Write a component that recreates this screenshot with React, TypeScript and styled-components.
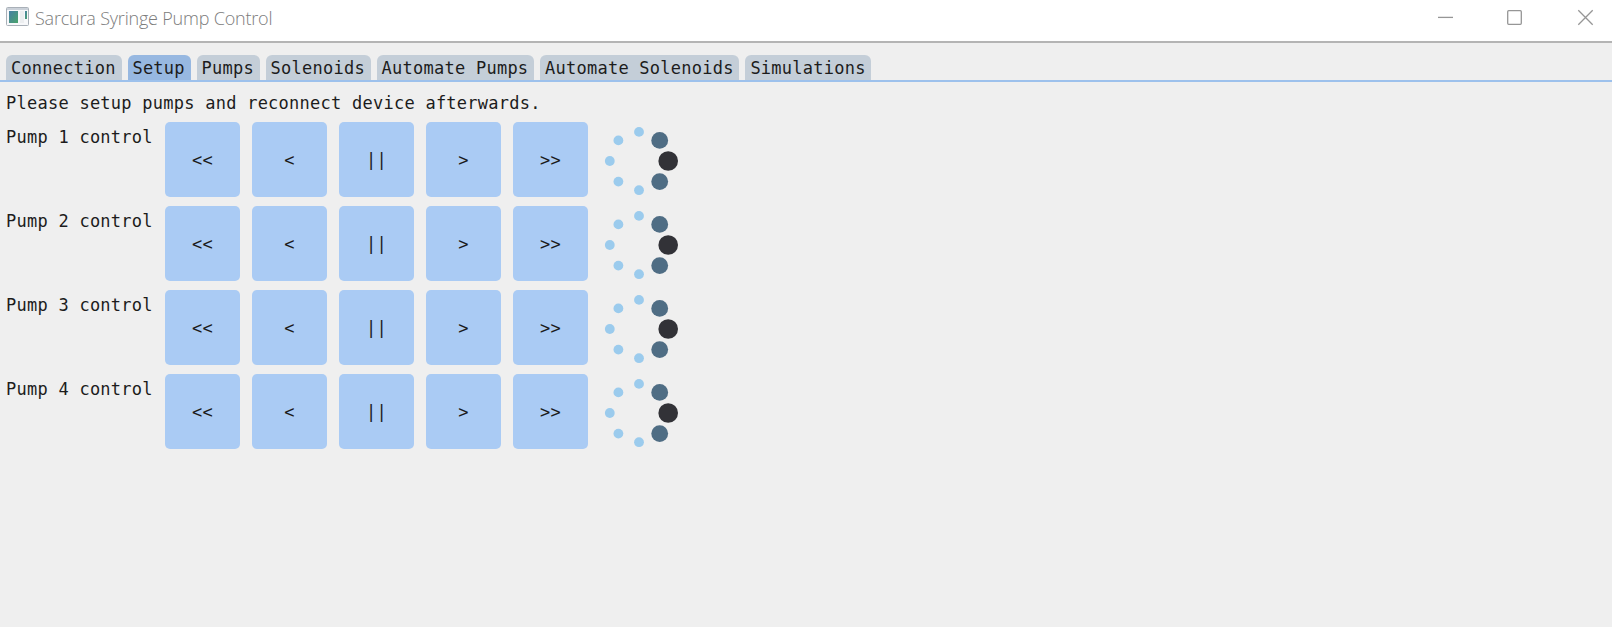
import React from 'react';
import styled, { createGlobalStyle } from 'styled-components';

const GlobalStyle = createGlobalStyle`
  * { box-sizing: border-box; }
  body { margin: 0; background: #efefef; overflow: hidden; }
`;

const Window = styled.div`
  display: flex;
  flex-direction: column;
  width: 1612px;
  height: 627px;
  background: #efefef;
  font-family: 'DejaVu Sans Mono', monospace;
  font-size: 17px;
  letter-spacing: 0.25px;
  line-height: 20px;
  color: #1c1c1c;
  white-space: pre;
`;

const TitleBar = styled.header`
  display: flex;
  align-items: flex-start;
  height: 43px;
  padding-left: 6px;
  background: #fff;
  border-bottom: 2px solid #b4b4b4;
`;

const AppIcon = styled.svg`
  margin-top: 7px;
  flex: none;
`;

const Title = styled.h1`
  margin: 6px 0 0 6px;
  flex: 1;
  font: 300 18px/25px 'Open Sans', 'Noto Sans', sans-serif;
  letter-spacing: -0.2px;
  color: #7c7c7c;
`;

const WindowControls = styled.svg`
  flex: none;
`;

const TabBar = styled.nav`
  display: flex;
  gap: 6px;
  height: 39px;
  padding: 11.5px 6px 0;
  border-bottom: 2px solid #9dc1ec;
`;

const Tab = styled.button<{ $active?: boolean }>`
  height: 25.5px;
  padding: 0 5.75px 0 4.9px;
  border: 0;
  border-radius: 6px 6px 0 0;
  background: ${({ $active }) => ($active ? '#97b8e1' : '#c4ced8')};
  color: inherit;
  font: inherit;
  letter-spacing: inherit;
  line-height: 26px;
`;

const Content = styled.main`
  padding: 11px 6px;
`;

const Message = styled.p`
  margin: 0 0 9px;
`;

const PumpList = styled.div`
  display: flex;
  flex-direction: column;
  gap: 9px;
`;

const PumpRow = styled.div`
  display: flex;
  height: 75px;
`;

const PumpLabel = styled.span`
  width: 159px;
  padding-top: 5px;
`;

const ButtonGroup = styled.div`
  display: flex;
  gap: 12px;
`;

const PumpButton = styled.button`
  width: 75px;
  height: 75px;
  padding: 0;
  border: 0;
  border-radius: 5px;
  background: #aacbf4;
  color: inherit;
  font: inherit;
  letter-spacing: inherit;
`;

const Spinner = styled.svg`
  margin-left: 12px;
`;

const tabs = ['Connection', 'Setup', 'Pumps', 'Solenoids', 'Automate Pumps', 'Automate Solenoids', 'Simulations'];
const actions = ['<<', '<', '||', '>', '>>'];

const dots = [
  { x: 39, y: 9.9, r: 4.9, fill: '#9bcbed' },
  { x: 18.4, y: 18.4, r: 4.9, fill: '#9bcbed' },
  { x: 9.8, y: 39, r: 4.9, fill: '#9bcbed' },
  { x: 18.4, y: 59.6, r: 4.9, fill: '#9bcbed' },
  { x: 39, y: 68.2, r: 4.9, fill: '#9bcbed' },
  { x: 59.7, y: 18.4, r: 8.4, fill: '#4f6d84' },
  { x: 59.7, y: 59.6, r: 8.4, fill: '#4f6d84' },
  { x: 68.2, y: 39, r: 9.8, fill: '#323237' },
];

function BusyIndicator() {
  return (
    <Spinner width="78" height="78" viewBox="0 0 78 78">
      {dots.map((d, i) => (
        <circle key={i} cx={d.x} cy={d.y} r={d.r} fill={d.fill} />
      ))}
    </Spinner>
  );
}

export default function App() {
  return (
    <Window>
      <GlobalStyle />
      <TitleBar>
        <AppIcon width="23" height="19" viewBox="0 0 23 19">
          <defs>
            <linearGradient id="pane" x1="0" y1="0" x2="1" y2="1">
              <stop offset="0" stopColor="#477fa5" />
              <stop offset="1" stopColor="#4aa36b" />
            </linearGradient>
          </defs>
          <rect x="0.5" y="0.5" width="22" height="18" rx="1" fill="#f7f8fa" stroke="#a9b0b8" />
          <rect x="1" y="1" width="21" height="2" fill="#cbd1d9" />
          <rect x="3" y="4" width="9" height="12" fill="url(#pane)" />
          <rect x="14" y="4" width="4" height="12" fill="#eceef0" />
          <rect x="19" y="4" width="2" height="8" fill="url(#pane)" />
        </AppIcon>
        <Title>Sarcura Syringe Pump Control</Title>
        <WindowControls width="200" height="40" viewBox="0 0 200 40" fill="none" stroke="#969696" strokeWidth="1.3">
          <path d="M26 17.4H41" />
          <rect x="95.7" y="10.7" width="13.6" height="13.6" rx="1" />
          <path d="M166.3 10.3L180.7 24.7M180.7 10.3L166.3 24.7" />
        </WindowControls>
      </TitleBar>
      <TabBar>
        {tabs.map((name) => (
          <Tab key={name} $active={name === 'Setup'}>{name}</Tab>
        ))}
      </TabBar>
      <Content>
        <Message>Please setup pumps and reconnect device afterwards.</Message>
        <PumpList>
          {[1, 2, 3, 4].map((pump) => (
            <PumpRow key={pump}>
              <PumpLabel>{`Pump ${pump} control`}</PumpLabel>
              <ButtonGroup>
                {actions.map((label) => (
                  <PumpButton key={label}>{label}</PumpButton>
                ))}
              </ButtonGroup>
              <BusyIndicator />
            </PumpRow>
          ))}
        </PumpList>
      </Content>
    </Window>
  );
}
